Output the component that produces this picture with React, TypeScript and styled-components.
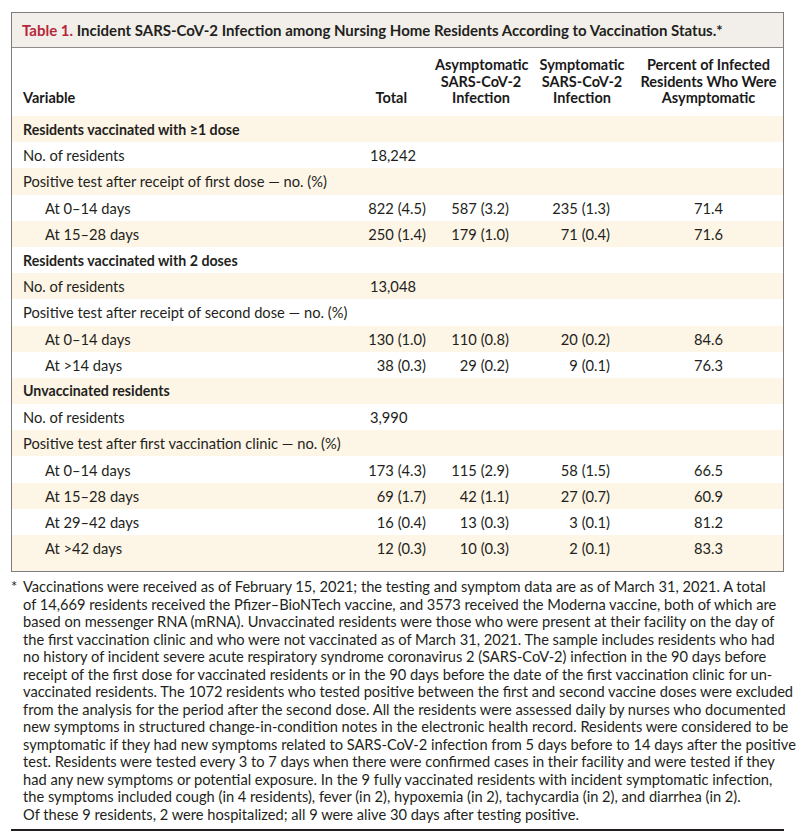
import * as React from 'react';
import styled, { createGlobalStyle } from 'styled-components';

const GlobalStyle = createGlobalStyle`
  body {
    margin: 0;
    background: #ffffff;
    color: #231f20;
    font-family: Lato, "Open Sans", sans-serif;
  }
`;

type RowData = {
  label: string;
  kind: 'section' | 'plain' | 'indent';
  values?: string[];
  leftTotal?: boolean;
};

const rows: RowData[] = [
  { label: 'Residents vaccinated with ≥1 dose', kind: 'section' },
  { label: 'No. of residents', kind: 'plain', values: ['18,242'], leftTotal: true },
  { label: 'Positive test after receipt of first dose — no. (%)', kind: 'plain' },
  { label: 'At 0–14 days', kind: 'indent', values: ['822 (4.5)', '587 (3.2)', '235 (1.3)', '71.4'] },
  { label: 'At 15–28 days', kind: 'indent', values: ['250 (1.4)', '179 (1.0)', '71 (0.4)', '71.6'] },
  { label: 'Residents vaccinated with 2 doses', kind: 'section' },
  { label: 'No. of residents', kind: 'plain', values: ['13,048'], leftTotal: true },
  { label: 'Positive test after receipt of second dose — no. (%)', kind: 'plain' },
  { label: 'At 0–14 days', kind: 'indent', values: ['130 (1.0)', '110 (0.8)', '20 (0.2)', '84.6'] },
  { label: 'At >14 days', kind: 'indent', values: ['38 (0.3)', '29 (0.2)', '9 (0.1)', '76.3'] },
  { label: 'Unvaccinated residents', kind: 'section' },
  { label: 'No. of residents', kind: 'plain', values: ['3,990'], leftTotal: true },
  { label: 'Positive test after first vaccination clinic — no. (%)', kind: 'plain' },
  { label: 'At 0–14 days', kind: 'indent', values: ['173 (4.3)', '115 (2.9)', '58 (1.5)', '66.5'] },
  { label: 'At 15–28 days', kind: 'indent', values: ['69 (1.7)', '42 (1.1)', '27 (0.7)', '60.9'] },
  { label: 'At 29–42 days', kind: 'indent', values: ['16 (0.4)', '13 (0.3)', '3 (0.1)', '81.2'] },
  { label: 'At >42 days', kind: 'indent', values: ['12 (0.3)', '10 (0.3)', '2 (0.1)', '83.3'] },
];

// per-column alignment of the numeric cells
const valueCols = [
  { align: 'right', pad: '0 9px 0 0' },
  { align: 'right', pad: '0 21px 0 0' },
  { align: 'right', pad: '0 20px 0 0' },
  { align: 'center', pad: '0 0 0 4px' },
];

const footnoteLines = [
  'Vaccinations were received as of February 15, 2021; the testing and symptom data are as of March 31, 2021. A total',
  'of 14,669 residents received the Pfizer–BioNTech vaccine, and 3573 received the Moderna vaccine, both of which are',
  'based on messenger RNA (mRNA). Unvaccinated residents were those who were present at their facility on the day of',
  'the first vaccination clinic and who were not vaccinated as of March 31, 2021. The sample includes residents who had',
  'no history of incident severe acute respiratory syndrome coronavirus 2 (SARS-CoV-2) infection in the 90 days before',
  'receipt of the first dose for vaccinated residents or in the 90 days before the date of the first vaccination clinic for un-',
  'vaccinated residents. The 1072 residents who tested positive between the first and second vaccine doses were excluded',
  'from the analysis for the period after the second dose. All the residents were assessed daily by nurses who documented',
  'new symptoms in structured change-in-condition notes in the electronic health record. Residents were considered to be',
  'symptomatic if they had new symptoms related to SARS-CoV-2 infection from 5 days before to 14 days after the positive',
  'test. Residents were tested every 3 to 7 days when there were confirmed cases in their facility and were tested if they',
  'had any new symptoms or potential exposure. In the 9 fully vaccinated residents with incident symptomatic infection,',
  'the symptoms included cough (in 4 residents), fever (in 2), hypoxemia (in 2), tachycardia (in 2), and diarrhea (in 2).',
  'Of these 9 residents, 2 were hospitalized; all 9 were alive 30 days after testing positive.',
];

const Page = styled.div`
  width: 773px;
  padding: 12px 0 0 11px;
`;

const Frame = styled.div`
  border: 1px solid #7d7d7d;
`;

const TitleBar = styled.div`
  height: 34px;
  display: flex;
  align-items: center;
  padding-left: 10px;
  background: #f2efea;
  border-bottom: 1px solid #8c8c8c;
  font-size: 15px;
  font-weight: 700;
  color: #231f20;
  white-space: nowrap;
`;

const TableNo = styled.span`
  color: #b5283a;
`;

const gridCols = '348px 75px 95px 100px 1fr';

const HeadRow = styled.div`
  display: grid;
  grid-template-columns: ${gridCols};
  align-items: end;
  height: 68px;
  box-sizing: border-box;
  padding-bottom: 9px;
  font-size: 14.5px;
  font-weight: 700;
  line-height: 16.7px;
  color: #1a1a1a;
`;

const HeadCell = styled.div<{ $align: string; $pad: string }>`
  text-align: ${p => p.$align};
  padding: ${p => p.$pad};
`;

const Row = styled.div<{ $shade: boolean; $tall?: boolean }>`
  display: grid;
  grid-template-columns: ${gridCols};
  align-items: ${p => (p.$tall ? 'start' : 'center')};
  height: ${p => (p.$tall ? '36px' : '26.2px')};
  box-sizing: border-box;
  padding-top: ${p => (p.$tall ? '4px' : '0')};
  background: ${p => (p.$shade ? '#fdf5e6' : '#ffffff')};
  font-size: 14.7px;
  white-space: nowrap;
`;

const Label = styled.div<{ $kind: RowData['kind'] }>`
  padding-left: ${p => (p.$kind === 'indent' ? '33px' : '11px')};
  font-weight: ${p => (p.$kind === 'section' ? 700 : 400)};
  font-size: ${p => (p.$kind === 'section' ? '14.2px' : 'inherit')};
`;

const Value = styled.div<{ $align: string; $pad: string }>`
  text-align: ${p => p.$align};
  padding: ${p => p.$pad};
`;

const Footnote = styled.div`
  position: relative;
  margin-top: 6px;
  padding-left: 12px;
  font-size: 14.65px;
  line-height: 17.5px;
  color: #231f20;
  white-space: nowrap;
`;

const Star = styled.span`
  position: absolute;
  left: 0;
  top: 0;
`;

const FootLine = styled.div``;

const BottomRule = styled.div`
  margin-top: 6px;
  border-top: 2px solid #231f20;
`;

export default function App() {
  return (
    <>
      <GlobalStyle />
      <Page>
        <Frame>
          <TitleBar>
            <TableNo>Table 1.</TableNo>&nbsp;Incident SARS-CoV-2 Infection among Nursing Home Residents
            According to Vaccination Status.*
          </TitleBar>
          <HeadRow>
            <HeadCell $align="left" $pad="0 0 0 11px">Variable</HeadCell>
            <HeadCell $align="right" $pad="0 28px 0 0">Total</HeadCell>
            <HeadCell $align="center" $pad="0 3px 0 0">
              Asymptomatic
              <br />
              SARS-CoV-2
              <br />
              Infection
            </HeadCell>
            <HeadCell $align="center" $pad="0 0 0 4px">
              Symptomatic
              <br />
              SARS-CoV-2
              <br />
              Infection
            </HeadCell>
            <HeadCell $align="center" $pad="0 0 0 4px">
              Percent of Infected
              <br />
              Residents Who Were
              <br />
              Asymptomatic
            </HeadCell>
          </HeadRow>
          {rows.map((r, i) => (
            <Row key={i} $shade={i % 2 === 0} $tall={i === rows.length - 1}>
              <Label $kind={r.kind}>{r.label}</Label>
              {valueCols.map((c, j) => {
                const v = r.values?.[j] ?? '';
                if (j === 0 && r.leftTotal) {
                  return (
                    <Value key={j} $align="left" $pad="0 0 0 10px">
                      {v}
                    </Value>
                  );
                }
                return (
                  <Value key={j} $align={c.align} $pad={c.pad}>
                    {v}
                  </Value>
                );
              })}
            </Row>
          ))}
        </Frame>
        <Footnote>
          <Star>*</Star>
          {footnoteLines.map((l, i) => (
            <FootLine key={i}>{l}</FootLine>
          ))}
        </Footnote>
        <BottomRule />
      </Page>
    </>
  );
}
